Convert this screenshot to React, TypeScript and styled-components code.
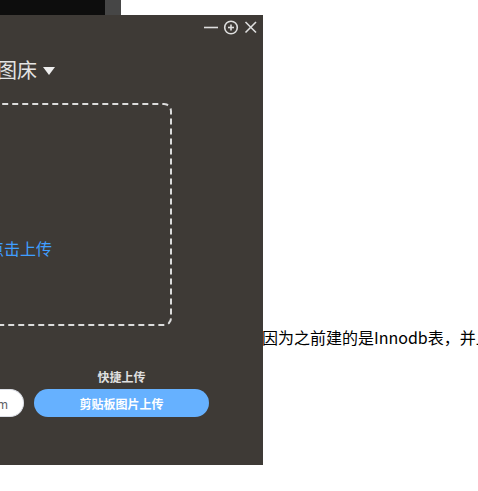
import React from "react";
import styled, { createGlobalStyle } from "styled-components";
import { CloudUpload } from "lucide-react";

const Global = createGlobalStyle`
  html, body { margin: 0; padding: 0; background: #fff; overflow: hidden; }
  body { font-family: "Noto Sans CJK SC", "Noto Sans", sans-serif; width: 478px; height: 491px; position: relative; }
`;

const Page = styled.div`
  width: 478px;
  height: 491px;
  position: relative;
  overflow: hidden;
`;

const TopStrip = styled.div`
  display: flex;
  height: 15px;
`;

const DarkBlock = styled.div`
  width: 105px;
  background: #0d0d0d;
`;

const GreyBlock = styled.div`
  width: 16px;
  background: #464646;
`;

const Paragraph = styled.p`
  margin: 310px 0 0;
  padding-left: 262px;
  font-size: 16px;
  line-height: 24px;
  color: #000;
  white-space: nowrap;
`;

const Window = styled.div`
  position: absolute;
  top: 15px;
  left: -367px;
  width: 630px;
  height: 450px;
  background: #3e3a36;
  display: flex;
  flex-direction: column;
  color: #ddd;
`;

const Controls = styled.div`
  height: 24px;
  display: flex;
  align-items: center;
  justify-content: flex-end;
  gap: 4px;
  padding-right: 4px;
`;

const IconBox = styled.svg`
  width: 16px;
  height: 16px;
  display: block;
`;

const Title = styled.div`
  margin-top: 17px;
  height: 28px;
  display: flex;
  align-items: center;
  justify-content: flex-end;
  padding-right: 208px;
  font-size: 20px;
  line-height: 28px;
  color: #e4e4e4;
  gap: 6px;
`;

const Caret = styled.span`
  width: 0;
  height: 0;
  border-left: 6.5px solid transparent;
  border-right: 6.5px solid transparent;
  border-top: 8px solid #eee;
  margin-top: 2px;
`;

const DropBox = styled.div`
  margin-top: 19px;
  margin-left: auto;
  margin-right: 91px;
  width: 448px;
  height: 223px;
  box-sizing: border-box;
  border: 2px dashed #dcdcdc;
  border-radius: 8px;
  display: flex;
  flex-direction: column;
  align-items: center;
  justify-content: center;
  gap: 12px;
  padding-bottom: 6px;
`;

const DropText = styled.div`
  font-size: 16px;
  line-height: 24px;
  color: #c0c0c0;
`;

const Em = styled.em`
  font-style: normal;
  color: #409eff;
`;

const Bottom = styled.div`
  margin-top: 43px;
  display: flex;
  justify-content: flex-end;
  padding-right: 54px;
  gap: 10px;
`;

const Column = styled.div<{ $width?: number }>`
  display: flex;
  flex-direction: column;
  align-items: center;
  gap: 4px;
  width: ${(p) => (p.$width ? `${p.$width}px` : "auto")};
`;

const Label = styled.div`
  font-size: 12px;
  line-height: 16px;
  color: #e0e0e0;
  font-weight: 600;
`;

const Group = styled.div`
  display: flex;
`;

const RadioButton = styled.div<{ $first?: boolean; $last?: boolean }>`
  height: 28px;
  box-sizing: border-box;
  padding: 0 15px;
  display: flex;
  align-items: center;
  background: #fff;
  border: 1px solid #dcdfe6;
  border-left-width: ${(p) => (p.$first ? "1px" : "0")};
  border-radius: ${(p) =>
    p.$first ? "14px 0 0 14px" : p.$last ? "0 14px 14px 0" : "0"};
  font-size: 12px;
  color: #606266;
`;

const PrimaryButton = styled.button`
  width: 100%;
  height: 28px;
  border: none;
  border-radius: 14px;
  background: #66b1ff;
  color: #fff;
  font-family: inherit;
  font-size: 12px;
  font-weight: 600;
  padding: 0;
  cursor: pointer;
`;

export default function App() {
  const formats = ["Markdown", "HTML", "URL", "UBB", "Custom"];
  return (
    <Page>
      <Global />
      <TopStrip>
        <DarkBlock />
        <GreyBlock />
      </TopStrip>
      <Paragraph>因为之前建的是Innodb表，并且数据量比较大</Paragraph>
      <Window>
        <Controls>
          <IconBox viewBox="0 0 16 16">
            <line x1="1" y1="8.5" x2="15" y2="8.5" stroke="#dedede" strokeWidth="1.6" />
          </IconBox>
          <IconBox viewBox="0 0 16 16">
            <circle cx="8" cy="8.5" r="6.3" fill="none" stroke="#dedede" strokeWidth="1.6" />
            <line x1="5" y1="8.5" x2="11" y2="8.5" stroke="#dedede" strokeWidth="1.6" />
            <line x1="8" y1="5.5" x2="8" y2="11.5" stroke="#dedede" strokeWidth="1.6" />
          </IconBox>
          <IconBox viewBox="0 0 16 16">
            <line x1="2.5" y1="3" x2="13" y2="13.5" stroke="#dedede" strokeWidth="1.6" />
            <line x1="13" y1="3" x2="2.5" y2="13.5" stroke="#dedede" strokeWidth="1.6" />
          </IconBox>
        </Controls>
        <Title>
          <span>图片上传 - 图床</span>
          <Caret />
        </Title>
        <DropBox>
          <CloudUpload size={60} color="#8c8c8c" strokeWidth={1.2} />
          <DropText>
            将文件拖到此处，或<Em>点击上传</Em>
          </DropText>
        </DropBox>
        <Bottom>
          <Column>
            <Label>链接格式</Label>
            <Group>
              {formats.map((f, i) => (
                <RadioButton key={f} $first={i === 0} $last={i === formats.length - 1}>
                  {f}
                </RadioButton>
              ))}
            </Group>
          </Column>
          <Column $width={175}>
            <Label>快捷上传</Label>
            <PrimaryButton>剪贴板图片上传</PrimaryButton>
          </Column>
        </Bottom>
      </Window>
    </Page>
  );
}
